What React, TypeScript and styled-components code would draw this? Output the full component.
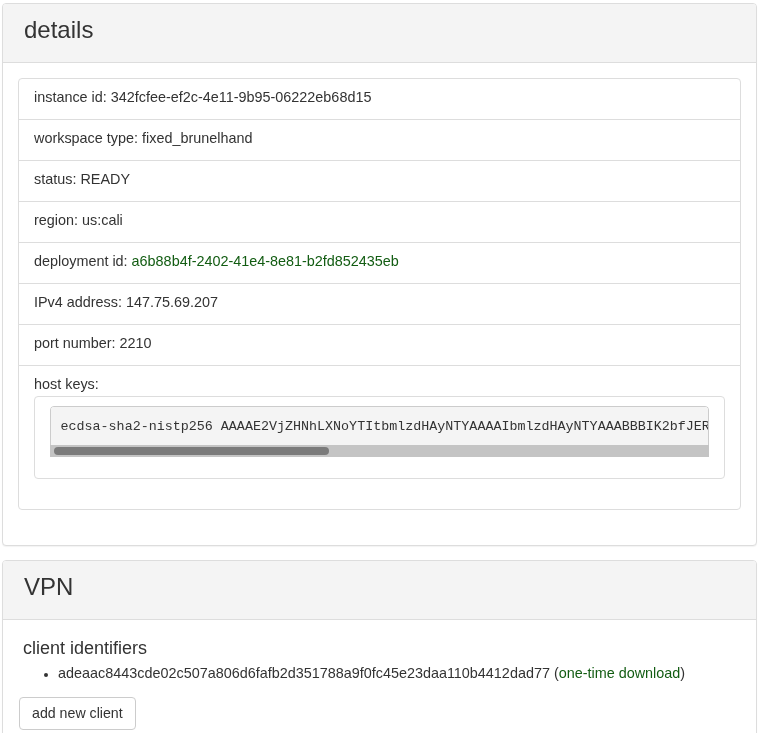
import React from "react";
import styled, { createGlobalStyle } from "styled-components";

const GlobalStyle = createGlobalStyle`
  html, body {
    margin: 0;
    padding: 0;
    background: #fff;
  }
  body {
    font-family: "Liberation Sans", Arial, Helvetica, sans-serif;
    font-size: 14.4px;
    line-height: 20px;
    color: #333;
  }
  * { box-sizing: border-box; }
`;

const Page = styled.div`
  padding: 3px 2px 0 2px;
`;

const Panel = styled.section`
  border: 1px solid #ddd;
  border-radius: 4px;
  background: #fff;
  box-shadow: 0 1px 1px rgba(0, 0, 0, 0.05);
  margin-bottom: 14px;
`;

const PanelHeading = styled.div`
  background: #f4f4f4;
  border-bottom: 1px solid #ddd;
  border-radius: 3px 3px 0 0;
  padding: 13px 21px 19px 21px;
`;

const PanelTitle = styled.h3`
  margin: 0;
  font-size: 24px;
  line-height: 26px;
  font-weight: 400;
  color: #333;
`;

const PanelBody = styled.div<{ $pad?: string }>`
  padding: ${(p) => p.$pad ?? "15px"};
`;

const ListGroup = styled.ul`
  list-style: none;
  margin: 0 0 20px 0;
  padding: 0;
`;

const ListItem = styled.li<{ $block?: boolean }>`
  border: 1px solid #ddd;
  margin-bottom: -1px;
  padding: ${(p) => (p.$block ? "8px 15px 10px 15px" : "8px 15px 12px 15px")};
  background: #fff;
  &:first-child {
    border-top-left-radius: 4px;
    border-top-right-radius: 4px;
  }
  &:last-child {
    margin-bottom: 0;
    border-bottom-left-radius: 4px;
    border-bottom-right-radius: 4px;
  }
`;

const Value = styled.span<{ $green?: boolean }>`
  color: ${(p) => (p.$green ? "#125c12" : "inherit")};
`;

const KeyLabel = styled.div`
  line-height: 20px;
  margin-bottom: 2px;
`;

const KeyBox = styled.div`
  border: 1px solid #ddd;
  border-radius: 4px;
  padding: 9px 15px 11px 15px;
  margin-bottom: 20px;
`;

const ScrollArea = styled.div`
  margin: 0 0 10px 0;
  border-radius: 4px 4px 0 0;
  overflow: hidden;
`;

const Pre = styled.pre`
  margin: 0;
  padding: 9.5px 9.5px;
  background: #f4f4f4;
  border: 1px solid #ccc;
  border-bottom: 0;
  border-radius: 4px 4px 0 0;
  font-family: "Liberation Mono", "Courier New", monospace;
  font-size: 13.36px;
  line-height: 19px;
  color: #333;
  white-space: pre;
  overflow-x: auto;
  overflow-y: hidden;
  scrollbar-width: none;
  &::-webkit-scrollbar {
    display: none;
  }
`;

const ScrollTrack = styled.div`
  height: 12px;
  background: #c4c4c4;
  padding: 2px 0 2px 4px;
  display: flex;
`;

const ScrollThumb = styled.div`
  width: 42%;
  height: 8px;
  border-radius: 4px;
  background: #7b7b7b;
`;

const SubTitle = styled.h4`
  margin: 0 0 4px 0;
  padding-left: 4px;
  font-size: 18px;
  line-height: 22px;
  font-weight: 400;
  color: #333;
`;

const ClientList = styled.ul`
  margin: 0 0 14px 0;
  padding-left: 39px;
  list-style: disc;
  line-height: 20px;
  li::marker {
    font-size: 12px;
  }
`;

const Button = styled.button`
  display: inline-block;
  font-family: "Liberation Sans", Arial, Helvetica, sans-serif;
  font-size: 14.2px;
  line-height: 19px;
  color: #333;
  background: #fff;
  border: 1px solid #ccc;
  border-radius: 4px;
  padding: 6px 12px;
  cursor: pointer;
`;

const details: { label: string; value: string; green?: boolean }[] = [
  { label: "instance id", value: "342fcfee-ef2c-4e11-9b95-06222eb68d15" },
  { label: "workspace type", value: "fixed_brunelhand" },
  { label: "status", value: "READY" },
  { label: "region", value: "us:cali" },
  { label: "deployment id", value: "a6b88b4f-2402-41e4-8e81-b2fd852435eb", green: true },
  { label: "IPv4 address", value: "147.75.69.207" },
  { label: "port number", value: "2210" },
];

const hostKey =
  "ecdsa-sha2-nistp256 AAAAE2VjZHNhLXNoYTItbmlzdHAyNTYAAAAIbmlzdHAyNTYAAABBBIK2bfJER+q7mX3sVbNcA9pLwTf0uQhY1eRzK8gDoj4iS6nZyWvEaHt5MxBlCUkO2dP7FqJw3rGsLNi8ybVcT0ea= root@workspace-342fcfee";

export default function App() {
  return (
    <>
      <GlobalStyle />
      <Page>
        <Panel>
          <PanelHeading>
            <PanelTitle>details</PanelTitle>
          </PanelHeading>
          <PanelBody>
            <ListGroup>
              {details.map((d) => (
                <ListItem key={d.label}>
                  {d.label}: <Value $green={d.green}>{d.value}</Value>
                </ListItem>
              ))}
              <ListItem $block>
                <KeyLabel>host keys:</KeyLabel>
                <KeyBox>
                  <ScrollArea>
                    <Pre>{hostKey}</Pre>
                    <ScrollTrack>
                      <ScrollThumb />
                    </ScrollTrack>
                  </ScrollArea>
                </KeyBox>
              </ListItem>
            </ListGroup>
          </PanelBody>
        </Panel>
        <Panel>
          <PanelHeading>
            <PanelTitle>VPN</PanelTitle>
          </PanelHeading>
          <PanelBody $pad="17px 16px 15px 16px">
            <SubTitle>client identifiers</SubTitle>
            <ClientList>
              <li>
                adeaac8443cde02c507a806d6fafb2d351788a9f0fc45e23daa110b4412dad77 (
                <Value $green>one-time download</Value>)
              </li>
            </ClientList>
            <Button>add new client</Button>
          </PanelBody>
        </Panel>
      </Page>
    </>
  );
}
